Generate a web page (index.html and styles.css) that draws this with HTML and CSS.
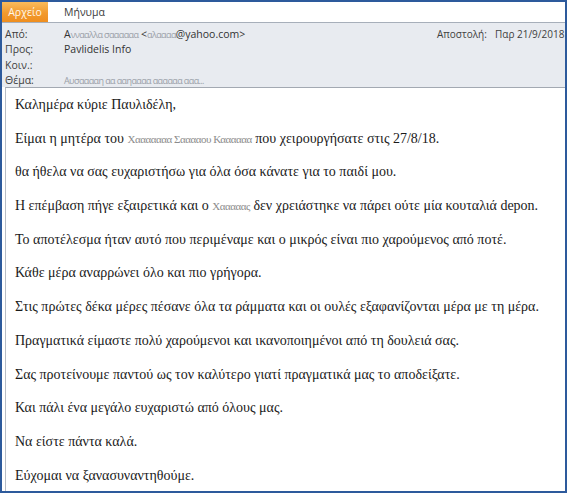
FILE: index.html
```html
<!DOCTYPE html>
<html lang="el">
<head>
<meta charset="utf-8">
<title>Μήνυμα</title>
<link rel="stylesheet" href="styles.css">
</head>
<body>
<div class="window">
  <div class="tabs">
    <div class="tab-file">Αρχείο</div>
    <div class="tab">Μήνυμα</div>
  </div>
  <div class="header">
    <div class="row">
      <span class="label">Από:</span>
      <span class="value">Α<span class="blur">ννααλλα σαααααα</span> &lt;<span class="blur">αλαααα</span>@yahoo.com&gt;</span>
      <span class="sent"><span class="sent-label">Αποστολή:</span><span class="sent-value">Παρ 21/9/2018 1</span></span>
    </div>
    <div class="row">
      <span class="label">Προς:</span>
      <span class="value">Pavlidelis Info</span>
    </div>
    <div class="row">
      <span class="label">Κοιν.:</span>
      <span class="value"></span>
    </div>
    <div class="row">
      <span class="label">Θέμα:</span>
      <span class="value blur">Αυσααααη αα ααηαααα αααααα ααα...</span>
    </div>
  </div>
  <div class="body">
    <p>Καλημέρα κύριε Παυλιδέλη,</p>
    <p>Είμαι η μητέρα του <span class="blur">Χααααααα Σααααου Καααααα</span> που χειρουργήσατε στις 27/8/18.</p>
    <p>θα ήθελα να σας ευχαριστήσω για όλα όσα κάνατε για το παιδί μου.</p>
    <p>Η επέμβαση πήγε εξαιρετικά και ο <span class="blur">Χααααας</span> δεν χρειάστηκε να πάρει ούτε μία κουταλιά depon.</p>
    <p>Το αποτέλεσμα ήταν αυτό που περιμέναμε και ο μικρός είναι πιο χαρούμενος από ποτέ.</p>
    <p>Κάθε μέρα αναρρώνει όλο και πιο γρήγορα.</p>
    <p>Στις πρώτες δέκα μέρες πέσανε όλα τα ράμματα και οι ουλές εξαφανίζονται μέρα με τη μέρα.</p>
    <p>Πραγματικά είμαστε πολύ χαρούμενοι και ικανοποιημένοι από τη δουλειά σας.</p>
    <p>Σας προτείνουμε παντού ως τον καλύτερο γιατί πραγματικά μας το αποδείξατε.</p>
    <p>Και πάλι ένα μεγάλο ευχαριστώ από όλους μας.</p>
    <p>Να είστε πάντα καλά.</p>
    <p>Εύχομαι να ξανασυναντηθούμε.</p>
  </div>
</div>
</body>
</html>
```

FILE: styles.css
```css
html, body {
  margin: 0;
  padding: 0;
  background: #ffffff;
}

.window {
  width: 567px;
  height: 493px;
  box-sizing: border-box;
  border: 2px solid #2d5a9c;
  display: flex;
  flex-direction: column;
  overflow: hidden;
  font-family: "Open Sans", "Noto Sans", sans-serif;
}

.tabs {
  height: 20px;
  flex: none;
  display: flex;
  align-items: stretch;
  background: #ffffff;
}

.tab-file {
  width: 46px;
  background: linear-gradient(#f9bb5c, #f29a2e 55%, #ef8e1f);
  color: #fff6e8;
  font-size: 10.5px;
  display: flex;
  align-items: center;
  justify-content: center;
}

.tab {
  padding-left: 16px;
  color: #3b3b3b;
  font-size: 10.5px;
  display: flex;
  align-items: center;
}

.header {
  flex: none;
  border-top: 1px solid #a7afba;
  background: #e8ebf0;
  padding: 3px 0 0 3px;
  height: 65px;
  box-sizing: border-box;
}

.row {
  height: 15.5px;
  display: flex;
  align-items: center;
  font-size: 10.5px;
  color: #3f3f3f;
  white-space: nowrap;
}

.label {
  width: 59px;
  flex: none;
}

.value {
  flex: 1;
  color: #333333;
}

.blur {
  color: #9aa0a8;
  letter-spacing: -0.6px;
  font-size: 9px;
}

.sent {
  width: 128px;
  flex: none;
  display: flex;
  font-size: 10px;
}

.sent-label {
  width: 58px;
  flex: none;
}

.sent-value {
  flex: none;
}

.body {
  flex: 1;
  margin-left: 3px;
  border-left: 1px solid #b8bdc5;
  border-top: 1px solid #a3a9b2;
  background: #ffffff;
  padding: 9px 10px 0 9px;
  font-family: "Liberation Serif", "Times New Roman", serif;
  font-size: 14px;
  line-height: 16px;
  color: #1a1a1a;
}

.body p {
  margin: 0 0 17.7px 0;
  white-space: nowrap;
}

.body .blur {
  font-size: 11px;
  color: #8c8c8c;
  letter-spacing: -0.5px;
}
```
